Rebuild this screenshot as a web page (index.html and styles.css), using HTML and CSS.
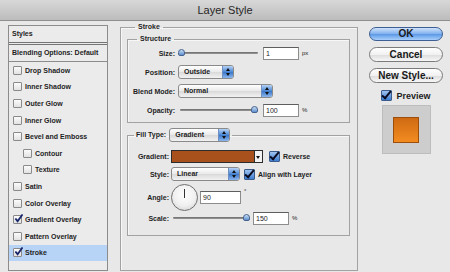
FILE: index.html
```html
<!DOCTYPE html>
<html lang="en">
<head>
  <meta charset="UTF-8" />
  <title>Layer Style</title>
  <link rel="stylesheet" href="styles.css">
</head>
<body>
  <div class="titlebar">Layer Style</div>

  <div class="dialog">
    <div class="styles-panel">
      <div class="panel-head">Styles</div>
      <div class="panel-blend">Blending Options: Default</div>
      <ul class="effects">
        <li><span class="cb"></span>Drop Shadow</li>
        <li><span class="cb"></span>Inner Shadow</li>
        <li><span class="cb"></span>Outer Glow</li>
        <li><span class="cb"></span>Inner Glow</li>
        <li><span class="cb"></span>Bevel and Emboss</li>
        <li class="sub"><span class="cb"></span>Contour</li>
        <li class="sub"><span class="cb"></span>Texture</li>
        <li><span class="cb"></span>Satin</li>
        <li><span class="cb"></span>Color Overlay</li>
        <li class="on"><span class="cb"><svg viewBox="0 0 10 10"><path d="M1.5 5 L4 8 L9.5 0.5" /></svg></span>Gradient Overlay</li>
        <li><span class="cb"></span>Pattern Overlay</li>
        <li class="on selected"><span class="cb"><svg viewBox="0 0 10 10"><path d="M1.5 5 L4 8 L9.5 0.5" /></svg></span>Stroke</li>
      </ul>
    </div>

    <fieldset class="group stroke">
      <legend>Stroke</legend>

      <fieldset class="group structure">
        <legend>Structure</legend>
        <div class="row">
          <span class="label">Size:</span>
          <div class="slider"><span class="thumb" style="left:0px"></span></div>
          <span class="field">1</span>
          <span class="unit">px</span>
        </div>
        <div class="row">
          <span class="label">Position:</span>
          <span class="popup pos"><span class="popup-text">Outside</span><span class="arrows"></span></span>
        </div>
        <div class="row">
          <span class="label">Blend Mode:</span>
          <span class="popup blend"><span class="popup-text">Normal</span><span class="arrows"></span></span>
        </div>
        <div class="row">
          <span class="label">Opacity:</span>
          <div class="slider"><span class="thumb" style="left:73px"></span></div>
          <span class="field">100</span>
          <span class="unit">%</span>
        </div>
      </fieldset>

      <fieldset class="group fill">
        <legend>
          <span class="legend-label">Fill Type:</span>
          <span class="popup filltype"><span class="popup-text">Gradient</span><span class="arrows"></span></span>
        </legend>
        <div class="row">
          <span class="label">Gradient:</span>
          <span class="swatch"></span><span class="swatch-menu"></span>
          <span class="check"></span><span class="check-text">Reverse</span>
        </div>
        <div class="row">
          <span class="label">Style:</span>
          <span class="popup style"><span class="popup-text">Linear</span><span class="arrows"></span></span>
          <span class="check"></span><span class="check-text">Align with Layer</span>
        </div>
        <div class="row angle-row">
          <span class="label">Angle:</span>
          <span class="dial"><span class="hand"></span></span>
          <span class="field angle">90</span>
          <span class="unit deg">°</span>
        </div>
        <div class="row">
          <span class="label">Scale:</span>
          <div class="slider scale"><span class="thumb" style="left:72px"></span></div>
          <span class="field">150</span>
          <span class="unit">%</span>
        </div>
      </fieldset>
    </fieldset>

    <div class="actions">
      <button class="btn ok">OK</button>
      <button class="btn">Cancel</button>
      <button class="btn">New Style...</button>
      <div class="preview-toggle"><span class="check"></span>Preview</div>
      <div class="preview"><span class="preview-swatch"></span></div>
    </div>
  </div>
</body>
</html>
```

FILE: styles.css
```css
html, body {
  margin: 0;
  padding: 0;
}
body {
  width: 450px;
  height: 272px;
  overflow: hidden;
  background: #e8e8e8;
  color: #1e1e1e;
  font-family: 'Liberation Sans', Arial, sans-serif;
  font-size: 7px;
  font-weight: bold;
}
.titlebar {
  height: 20px;
  line-height: 20px;
  text-align: center;
  font-size: 11px;
  font-weight: normal;
  color: #262626;
  background: linear-gradient(#d8d8d8, #bcbcbc);
  border-bottom: 1px solid #8e8e8e;
}
.dialog {
  display: flex;
  align-items: flex-start;
  padding-left: 8px;
}

/* styles list */
.styles-panel {
  width: 98px;
  height: 244px;
  margin-top: 4px;
  border: 1px solid #8c8c8c;
  background: #ebebeb;
}
.panel-head {
  height: 16px;
  line-height: 16px;
  padding-left: 3px;
  border-bottom: 3px double #747474;
}
.panel-blend {
  height: 16px;
  line-height: 16px;
  padding-left: 3px;
  border-bottom: 1px solid #8c8c8c;
}
.effects {
  list-style: none;
  margin: 0;
  padding: 0;
}
.effects li {
  height: 16.6px;
  display: flex;
  align-items: center;
  padding-left: 4px;
}
.effects li.sub {
  padding-left: 14px;
}
.effects li.selected {
  background: #b7d4f7;
}
.cb {
  position: relative;
  width: 7px;
  height: 7px;
  margin-right: 3px;
  border: 1px solid #8a8a8a;
  border-radius: 1px;
  background: linear-gradient(#fbfbfb, #e2e2e2);
}
.cb svg {
  position: absolute;
  left: 0;
  top: -2px;
  width: 9px;
  height: 9px;
}
.cb path {
  fill: none;
  stroke: #16246b;
  stroke-width: 2;
}

/* group boxes */
.group {
  margin: 0;
  min-width: 0;
  border: 1px solid #a2a2a2;
  box-shadow: inset 1px 1px 0 #f7f7f7;
}
.group legend {
  padding: 0 3px;
  line-height: 10px;
}
.stroke {
  width: 238px;
  height: 249px;
  box-sizing: border-box;
  margin: 1px 0 0 12px;
  padding: 2px 7px 0 6px;
}
.stroke > legend {
  margin-left: 8px;
}
.structure {
  padding: 2px 0 5px 0;
}
.structure > legend {
  margin-left: 9px;
}
.fill {
  margin-top: 5px;
  padding: 3px 0 10px 0;
}
.fill > legend {
  display: flex;
  align-items: center;
  margin-left: 6px;
  padding: 0 2px;
  line-height: 14px;
}
.legend-label {
  margin-right: 3px;
}

.row {
  display: flex;
  align-items: center;
  height: 14px;
  margin-top: 5px;
}
.row:first-of-type {
  margin-top: 0;
}
.label {
  width: 47px;
  text-align: right;
  margin-right: 3px;
}
.fill .label {
  width: 41px;
  margin-right: 2px;
}
.fill .row {
  margin-top: 4px;
}
.fill .angle-row {
  height: 26px;
  margin-top: 3px;
}
.fill .angle-row + .row {
  margin-top: 1px;
}

/* controls */
.slider {
  position: relative;
  width: 80px;
  height: 10px;
}
.slider::before {
  content: '';
  position: absolute;
  left: 2px;
  right: 0;
  top: 4px;
  height: 2px;
  border-radius: 1px;
  background: linear-gradient(#6a6a6a, #9a9a9a);
}
.slider.scale {
  width: 79px;
}
.thumb {
  position: absolute;
  top: 1px;
  width: 7px;
  height: 7px;
  border-radius: 50% 50% 2px 2px;
  border: 1px solid #44638f;
  box-sizing: border-box;
  background: linear-gradient(#c7dcf5, #5f8fd0);
}
.field {
  width: 32px;
  height: 11px;
  line-height: 11px;
  margin-left: 5px;
  padding-left: 2px;
  border: 1px solid #8d8d8d;
  border-top-color: #5e5e5e;
  background: #fff;
  font-weight: normal;
}
.fill .field {
  margin-left: 3px;
}
.field.angle {
  width: 37px;
  margin-left: 2px;
}
.unit {
  margin-left: 3px;
  font-weight: normal;
  font-size: 6px;
}
.unit.deg {
  align-self: flex-start;
  margin-top: 4px;
}

.popup {
  display: flex;
  align-items: stretch;
  height: 14px;
  box-sizing: border-box;
  border: 1px solid #8a8a8a;
  border-radius: 3px;
  background: linear-gradient(#ffffff, #e9e9e9 50%, #d9d9d9 51%, #f2f2f2);
  overflow: hidden;
}
.popup-text {
  flex: 1;
  line-height: 12px;
  padding-left: 5px;
}
.arrows {
  position: relative;
  width: 10px;
  border-left: 1px solid #6e8fc0;
  background: linear-gradient(#b6d2f5, #4a87d6 50%, #3a76c8 51%, #8ab6ee);
}
.arrows::before, .arrows::after {
  content: '';
  position: absolute;
  left: 3px;
  border-left: 2px solid transparent;
  border-right: 2px solid transparent;
}
.arrows::before {
  top: 2px;
  border-bottom: 3px solid #111;
}
.arrows::after {
  bottom: 2px;
  border-top: 3px solid #111;
}
.popup.pos { width: 56px; }
.popup.blend { width: 95px; }
.popup.filltype { width: 61px; }
.popup.style { width: 69px; }

.swatch {
  width: 82px;
  height: 11px;
  border: 1px solid #2c2c2c;
  background: #a9511d;
}
.swatch-menu {
  position: relative;
  width: 7px;
  height: 11px;
  border: 1px solid #2c2c2c;
  border-left: none;
  background: #f2f2f2;
}
.swatch-menu::after {
  content: '';
  position: absolute;
  left: 1px;
  top: 5px;
  border-left: 2.5px solid transparent;
  border-right: 2.5px solid transparent;
  border-top: 3px solid #111;
}
.check {
  position: relative;
  width: 9px;
  height: 9px;
  margin: 0 3px 0 6px;
  border: 1px solid #3b5b8c;
  border-radius: 1px;
  background: linear-gradient(#9fc2ef, #3e7ed2);
}
.check::after {
  content: '';
  position: absolute;
  left: 2px;
  top: -2px;
  width: 3px;
  height: 8px;
  border-right: 2px solid #0b0b20;
  border-bottom: 2px solid #0b0b20;
  transform: rotate(40deg);
}
.popup.style + .check {
  margin-left: 4px;
}

.dial {
  position: relative;
  width: 25px;
  height: 25px;
  border: 1px solid #6f6f6f;
  border-radius: 50%;
  background: radial-gradient(circle at 50% 40%, #ffffff, #f0f0f0 55%, #c9c9c9);
}
.hand {
  position: absolute;
  left: 12px;
  top: 4px;
  width: 1px;
  height: 9px;
  background: #333;
}

/* buttons */
.actions {
  display: flex;
  flex-direction: column;
  align-items: center;
  width: 74px;
  margin: 6px 0 0 11px;
}
.btn {
  width: 74px;
  height: 14px;
  margin: 0 0 6px;
  padding: 0;
  border: 1px solid #7b7b7b;
  border-radius: 8px;
  font-family: 'Liberation Sans', Arial, sans-serif;
  font-size: 10px;
  font-weight: bold;
  line-height: 12px;
  color: #1a1a1a;
  background: linear-gradient(#ffffff, #f1f1f1 50%, #dcdcdc 51%, #f7f7f7);
}
.btn.ok {
  border-color: #3e5f93;
  background: linear-gradient(#cfe2fb, #7fb0ee 50%, #5a97e6 51%, #a9d0fb);
}
.btn + .btn {
  height: 15px;
}
.preview-toggle {
  display: flex;
  align-items: center;
  margin-top: 1px;
  font-size: 9px;
}
.preview-toggle .check {
  width: 9px;
  height: 9px;
  margin: 0 4px 0 0;
}
.preview {
  display: flex;
  align-items: center;
  justify-content: center;
  width: 49px;
  height: 49px;
  margin-top: 4px;
  box-sizing: border-box;
  border: 1px solid #bdbdbd;
  background: #cdcdcd;
}
.preview-swatch {
  width: 24px;
  height: 24px;
  border: 1px solid #9c4e0a;
  background: linear-gradient(#cf6a13, #f28c20);
}
```
